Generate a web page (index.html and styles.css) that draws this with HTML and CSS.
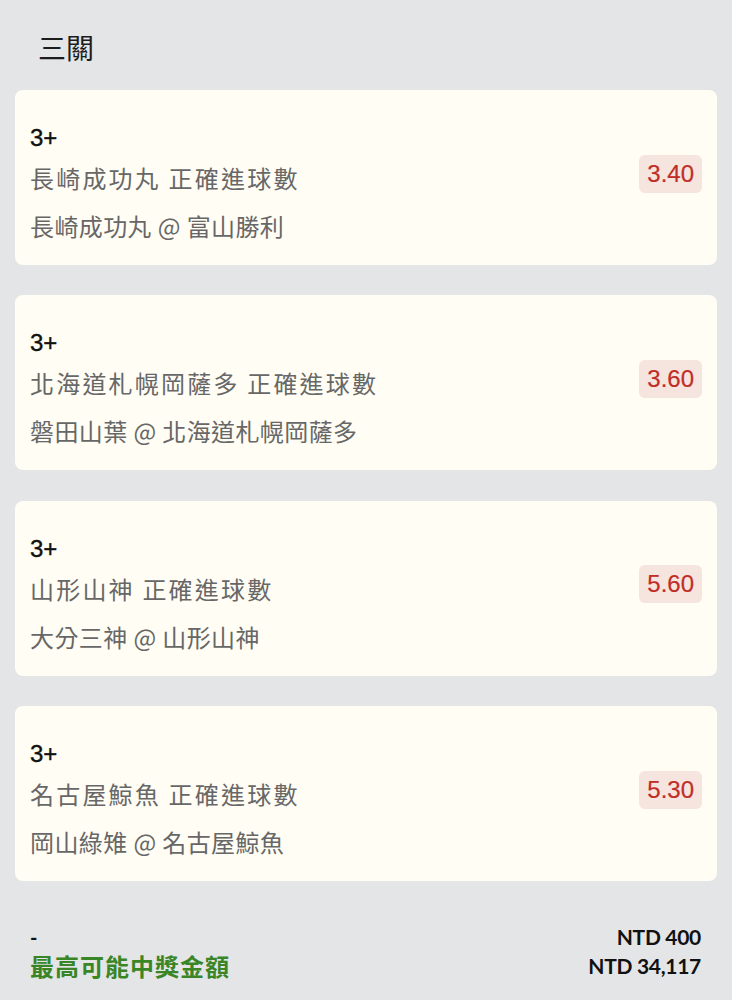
FILE: index.html
```html
<!DOCTYPE html>
<html lang="zh-Hant">
<head>
<meta charset="utf-8">
<title>三關</title>
<link rel="stylesheet" href="styles.css">
</head>
<body>
<div class="page">
  <h1 class="title">三關</h1>
  <div class="cards">
    <div class="card">
      <div class="info">
        <div class="pick">3+</div>
        <div class="market">長崎成功丸 正確進球數</div>
        <div class="match">長崎成功丸 @ 富山勝利</div>
      </div>
      <div class="odds">3.40</div>
    </div>
    <div class="card">
      <div class="info">
        <div class="pick">3+</div>
        <div class="market">北海道札幌岡薩多 正確進球數</div>
        <div class="match">磐田山葉 @ 北海道札幌岡薩多</div>
      </div>
      <div class="odds">3.60</div>
    </div>
    <div class="card">
      <div class="info">
        <div class="pick">3+</div>
        <div class="market">山形山神 正確進球數</div>
        <div class="match">大分三神 @ 山形山神</div>
      </div>
      <div class="odds">5.60</div>
    </div>
    <div class="card">
      <div class="info">
        <div class="pick">3+</div>
        <div class="market">名古屋鯨魚 正確進球數</div>
        <div class="match">岡山綠雉 @ 名古屋鯨魚</div>
      </div>
      <div class="odds">5.30</div>
    </div>
  </div>
  <div class="summary">
    <div class="row">
      <span class="dash">-</span>
      <span class="amount">NTD 400</span>
    </div>
    <div class="row">
      <span class="label">最高可能中獎金額</span>
      <span class="amount">NTD 34,117</span>
    </div>
  </div>
</div>
</body>
</html>
```

FILE: styles.css
```css
html, body {
  margin: 0;
  padding: 0;
  background: #e4e5e7;
}

body {
  font-family: "Noto Sans CJK TC", "Liberation Sans", sans-serif;
  color: #1f1f1f;
}

.page {
  width: 732px;
  height: 1000px;
  overflow: hidden;
}

.title {
  margin: 0;
  padding: 27px 0 0 38px;
  font-size: 28px;
  font-weight: 400;
  line-height: 40px;
  color: #1c1c1c;
}

.cards {
  display: flex;
  flex-direction: column;
  gap: 30.4px;
  margin: 23px 15px 0;
}

.card {
  display: flex;
  justify-content: space-between;
  height: 175px;
  box-sizing: border-box;
  padding: 0 15px;
  background: #fffdf4;
  border-radius: 8px;
}

.info {
  display: flex;
  flex-direction: column;
  padding-top: 33px;
}

.pick {
  font-family: "Liberation Sans", sans-serif;
  font-size: 24px;
  line-height: 30px;
  color: #111;
  -webkit-text-stroke: 0.4px #111;
}

.market,
.match {
  font-size: 24px;
  line-height: 30px;
  color: #676767;
}

.market {
  margin-top: 10px;
  letter-spacing: 2.2px;
}

.match {
  margin-top: 18px;
  letter-spacing: 0.4px;
}

.odds {
  align-self: center;
  margin-bottom: 8px;
  padding: 0 8px;
  height: 38px;
  line-height: 38px;
  border-radius: 6px;
  background: #f6e4de;
  color: #c02e27;
  font-family: "Liberation Sans", sans-serif;
  font-size: 24px;
  -webkit-text-stroke: 0.2px #c02e27;
}

.summary {
  padding: 41px 31px 0 30px;
}

.row {
  display: flex;
  justify-content: space-between;
  align-items: center;
  height: 29px;
}

.dash {
  font-family: "Lato", sans-serif;
  font-weight: 700;
  font-size: 20px;
  line-height: 24px;
  color: #111;
}

.label {
  font-weight: 700;
  font-size: 24px;
  line-height: 24px;
  letter-spacing: 1px;
  color: #3a8526;
}

.amount {
  font-family: "Lato", sans-serif;
  font-weight: 700;
  font-size: 21px;
  line-height: 24px;
  color: #111;
  letter-spacing: -0.3px;
}
```
